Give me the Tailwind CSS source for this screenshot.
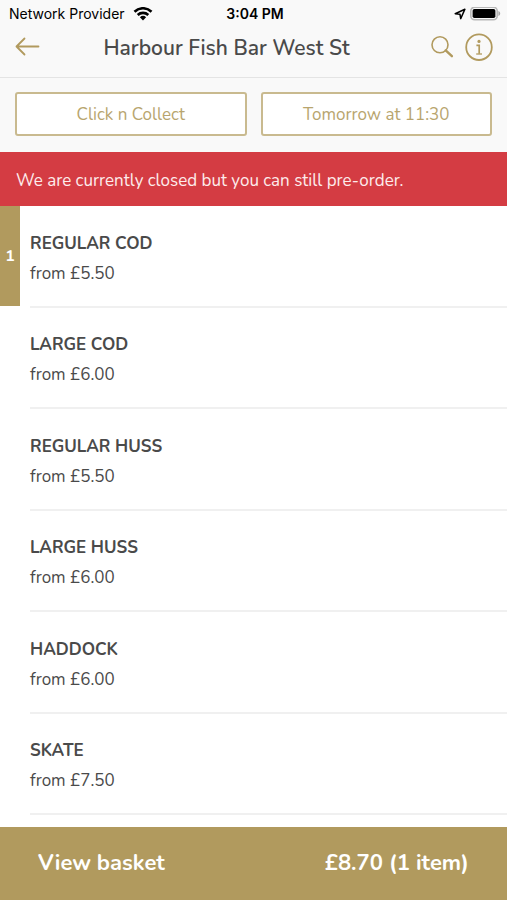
<!DOCTYPE html>
<html lang="en">
<head>
<meta charset="utf-8">
<meta name="viewport" content="width=device-width, initial-scale=1">
<title>Harbour Fish Bar West St</title>
<script src="https://cdn.jsdelivr.net/npm/@tailwindcss/browser@4"></script>
</head>
<body class="flex min-h-screen flex-col bg-white font-['Nunito','Lato',sans-serif] text-[#4a4a4a]">
  <header class="border-b border-[#e4e4e4] bg-[#f9f9f9]">
    <div class="grid h-7 grid-cols-[1fr_auto_1fr] items-center pr-[6px] pl-[9px] font-['Inter',sans-serif] text-sm text-black">
      <div class="flex items-center gap-2 whitespace-nowrap">
        <span>Network Provider</span>
        <svg class="h-[14px] w-5" viewBox="0 0 20 14" fill="none" stroke="currentColor" stroke-width="2.6" aria-label="Wi-Fi">
          <path d="M1.5 4.7a12.2 12.2 0 0 1 17 0"/>
          <path d="M4.7 8a7.7 7.7 0 0 1 10.6 0"/>
          <path d="M10 13.4 6.9 10.3a4.5 4.5 0 0 1 6.2 0Z" fill="currentColor" stroke="none"/>
        </svg>
      </div>
      <span class="font-semibold">3:04 PM</span>
      <div class="flex items-center justify-end gap-1">
        <svg class="size-3" viewBox="0 0 12 12" fill="none" stroke="currentColor" stroke-width="1.5" stroke-linejoin="round" aria-label="Location">
          <path d="M10.9 1.2 6.7 10.6 6 6.3 1.2 5.7Z"/>
        </svg>
        <svg class="h-[14px] w-[31px]" viewBox="0 0 31 14" aria-label="Battery full">
          <rect x=".8" y=".2" width="26.4" height="12.6" rx="3.8" fill="#f9f9f9" stroke="#b8b8b8" stroke-width="1.6"/>
          <rect x="2.6" y="2" width="22.8" height="9" rx="1.8" fill="#000"/>
          <path d="M28.4 4c2.4.8 2.4 4.2 0 5Z" fill="#a8a8a8"/>
        </svg>
      </div>
    </div>
    <div class="grid h-[49px] grid-cols-[26px_1fr_80px] items-center px-[14px] pb-3 text-[#b19a5e]">
      <a href="#" aria-label="Back" class="justify-self-start">
        <svg class="h-5 w-[26px]" viewBox="0 0 26 20" fill="none" stroke="currentColor" stroke-width="1.8" stroke-linecap="round" stroke-linejoin="round">
          <path d="M24.5 9.5H2.5M10.5 1.5l-8 8 8 8"/>
        </svg>
      </a>
      <h1 class="pt-1 text-center text-[21px] font-semibold whitespace-nowrap text-[#4a4a4a]">Harbour Fish Bar West St</h1>
      <div class="flex items-center justify-end gap-[11px]">
        <button type="button" aria-label="Search">
          <svg class="block size-6" viewBox="0 0 24 24" fill="none" stroke="currentColor">
            <circle cx="10" cy="9.8" r="8" stroke-width="1.6"/>
            <path d="m15.7 15.4 6.2 5.8" stroke-width="2.4" stroke-linecap="round"/>
          </svg>
        </button>
        <button type="button" aria-label="Information">
          <svg class="block size-7" viewBox="0 0 28 28" fill="none" stroke="currentColor">
            <circle cx="14" cy="14.2" r="12.8" stroke-width="1.8"/>
            <circle cx="14" cy="8.4" r="1.6" fill="currentColor" stroke="none"/>
            <path d="M11.4 12.4H14.2V20.8" stroke-width="1.7"/>
            <path d="M11.2 21h5.8" stroke-width="1.3"/>
          </svg>
        </button>
      </div>
    </div>
  </header>

  <div class="grid grid-cols-2 gap-[14px] bg-[#f9f9f9] px-[15px] pt-[14px] pb-4 text-[#b8a56e]">
    <button type="button" class="h-11 rounded-[3px] border-2 border-[#c9ba8f] bg-white pt-[2px] text-[17px]">Click n Collect</button>
    <button type="button" class="h-11 rounded-[3px] border-2 border-[#c9ba8f] bg-white pt-[2px] text-[17px]">Tomorrow at 11:30</button>
  </div>

  <p class="bg-[#d43c43] px-4 pt-[17px] pb-[13px] text-[17px] leading-6 text-[#fdecec]">We are currently closed but you can still pre-order.</p>

  <main class="flex flex-1 flex-col pb-3">
    <ul class="grid flex-1 auto-rows-fr text-[17px] leading-6">
      <li class="flex">
        <span class="mb-[2px] flex w-5 items-center justify-center bg-[#b19a5e] text-base font-bold text-white">1</span>
        <a href="#" class="ml-[10px] flex flex-1 flex-col justify-center gap-[6px] border-b-2 border-[#f0f0f0] pt-5 pb-[14px]"><span class="font-bold">REGULAR COD</span><span>from £5.50</span></a>
      </li>
      <li class="flex pl-[30px]"><a href="#" class="flex flex-1 flex-col justify-center gap-[6px] border-b-2 border-[#f0f0f0] pt-5 pb-[14px]"><span class="font-bold">LARGE COD</span><span>from £6.00</span></a></li>
      <li class="flex pl-[30px]"><a href="#" class="flex flex-1 flex-col justify-center gap-[6px] border-b-2 border-[#f0f0f0] pt-5 pb-[14px]"><span class="font-bold">REGULAR HUSS</span><span>from £5.50</span></a></li>
      <li class="flex pl-[30px]"><a href="#" class="flex flex-1 flex-col justify-center gap-[6px] border-b-2 border-[#f0f0f0] pt-5 pb-[14px]"><span class="font-bold">LARGE HUSS</span><span>from £6.00</span></a></li>
      <li class="flex pl-[30px]"><a href="#" class="flex flex-1 flex-col justify-center gap-[6px] border-b-2 border-[#f0f0f0] pt-5 pb-[14px]"><span class="font-bold">HADDOCK</span><span>from £6.00</span></a></li>
      <li class="flex pl-[30px]"><a href="#" class="flex flex-1 flex-col justify-center gap-[6px] border-b-2 border-[#f0f0f0] pt-5 pb-[14px]"><span class="font-bold">SKATE</span><span>from £7.50</span></a></li>
    </ul>
  </main>

  <button type="button" class="sticky bottom-0 flex h-[73px] w-full items-center justify-between bg-[#b19a5e] px-[38px] text-[22px] font-bold text-white">
    <span>View basket</span>
    <span>£8.70 (1 item)</span>
  </button>
</body>
</html>
